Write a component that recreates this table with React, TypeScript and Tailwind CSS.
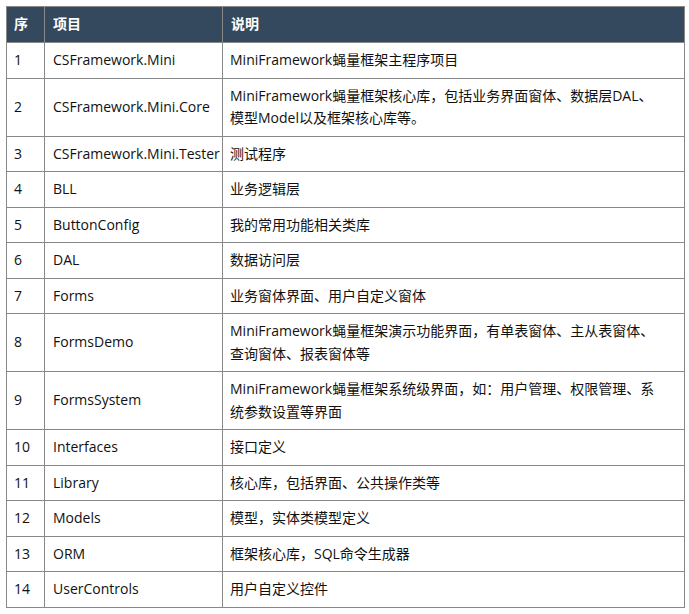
import React from "react";

const rows: [string, string, React.ReactNode][] = [
  ["1", "CSFramework.Mini", "MiniFramework蝇量框架主程序项目"],
  ["2", "CSFramework.Mini.Core", <>MiniFramework蝇量框架核心库，包括业务界面窗体、数据层DAL、<br />模型Model以及框架核心库等。</>],
  ["3", "CSFramework.Mini.Tester", "测试程序"],
  ["4", "BLL", "业务逻辑层"],
  ["5", "ButtonConfig", "我的常用功能相关类库"],
  ["6", "DAL", "数据访问层"],
  ["7", "Forms", "业务窗体界面、用户自定义窗体"],
  ["8", "FormsDemo", <>MiniFramework蝇量框架演示功能界面，有单表窗体、主从表窗体、<br />查询窗体、报表窗体等</>],
  ["9", "FormsSystem", <>MiniFramework蝇量框架系统级界面，如：用户管理、权限管理、系<br />统参数设置等界面</>],
  ["10", "Interfaces", "接口定义"],
  ["11", "Library", "核心库，包括界面、公共操作类等"],
  ["12", "Models", "模型，实体类模型定义"],
  ["13", "ORM", "框架核心库，SQL命令生成器"],
  ["14", "UserControls", "用户自定义控件"],
];

export default function App() {
  return (
    <div className="w-[689px] h-[614px] bg-white pt-[6px] pl-[6px]" style={{ fontFamily: '"Open Sans", "Noto Sans CJK SC", sans-serif' }}>
      <table className="border-collapse table-fixed w-[679px] text-[14px] leading-[22.5px] text-[#111]">
        <colgroup>
          <col className="w-[38px]" />
          <col className="w-[178px]" />
          <col className="w-[462px]" />
        </colgroup>
        <thead>
          <tr className="bg-[#34495e] text-white h-[36px]">
            <th className="border border-[#888] px-[7px] text-left font-semibold">序</th>
            <th className="border border-[#888] px-[8px] text-left font-semibold">项目</th>
            <th className="border border-[#888] px-[8px] text-left font-semibold">说明</th>
          </tr>
        </thead>
        <tbody>
          {rows.map(([n, p, d]) => (
            <tr key={n}>
              <td className="border border-[#888] px-[7px] py-[6px] whitespace-nowrap">{n}</td>
              <td className="border border-[#888] px-[8px] py-[6px] whitespace-nowrap">{p}</td>
              <td className="border border-[#888] px-[7px] py-[6px] whitespace-nowrap">{d}</td>
            </tr>
          ))}
        </tbody>
      </table>
    </div>
  );
}
